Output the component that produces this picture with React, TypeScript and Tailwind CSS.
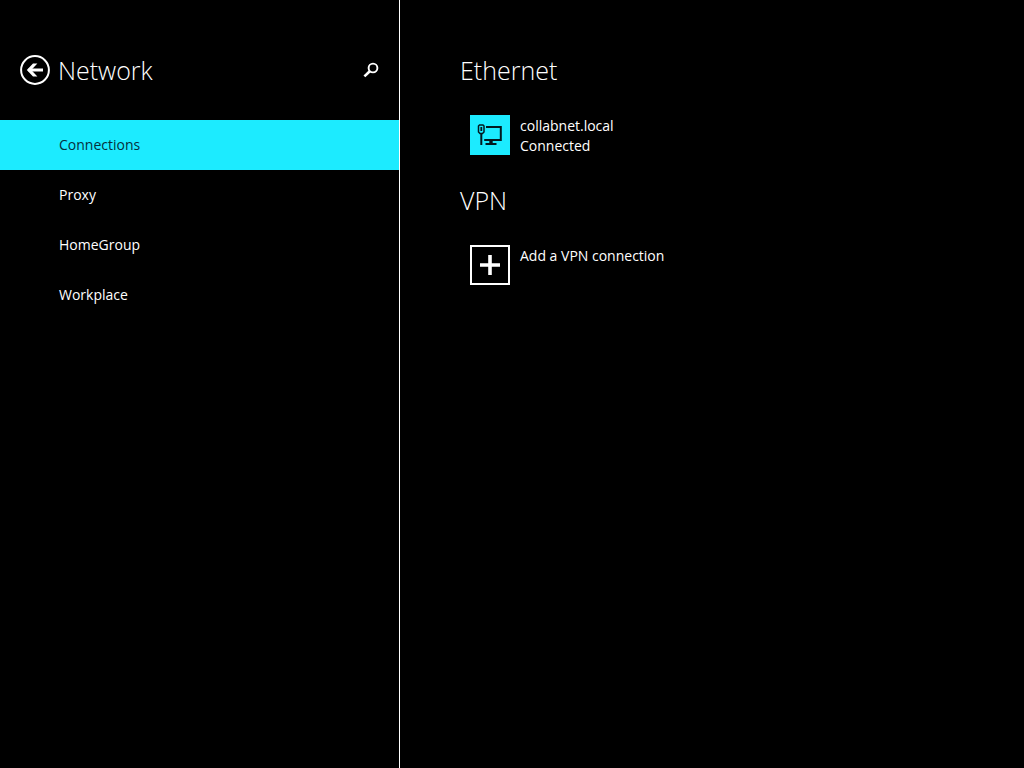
import { useState } from "react";
import type { ReactNode } from "react";

const navItems = ["Connections", "Proxy", "HomeGroup", "Workplace"];

function BackIcon() {
  return (
    <svg viewBox="0 0 30 30" className="h-[30px] w-[30px]" fill="none" stroke="currentColor" aria-hidden="true">
      <circle cx="15" cy="15" r="13.9" strokeWidth="2" />
      <path d="M8.5 15H23" strokeWidth="3" />
      <path d="M6.8 15l6.2-6.5h4.4L11.2 15l6.2 6.5h-4.4z" fill="currentColor" stroke="none" />
    </svg>
  );
}

function SearchIcon() {
  return (
    <svg viewBox="0 0 16 16" className="h-4 w-4" fill="none" stroke="currentColor" aria-hidden="true">
      <circle cx="10" cy="6" r="4.4" strokeWidth="1.9" />
      <path d="M6.8 9.2L1.4 14.4" strokeWidth="2.6" />
    </svg>
  );
}

function EthernetIcon() {
  return (
    <svg viewBox="0 0 40 40" className="h-10 w-10" fill="none" stroke="currentColor" aria-hidden="true">
      <path d="M9.5 10h3.5l1 1v6l-1.5 1.5h-2.5l-1.5-1.5v-6z" strokeWidth="1.5" />
      <path d="M11.3 12v4" strokeWidth="1.8" />
      <path d="M11.3 18.5V30" strokeWidth="2" />
      <path d="M16 12h14.8v13H14.2" strokeWidth="2" />
      <path d="M21 25v3.5" strokeWidth="3.4" />
      <path d="M15.5 29h11" strokeWidth="2" />
    </svg>
  );
}

function PlusIcon() {
  return (
    <svg viewBox="0 0 20 20" className="h-5 w-5" stroke="currentColor" strokeWidth="3.6" aria-hidden="true">
      <path d="M10 0v20M0 10h20" />
    </svg>
  );
}

interface SectionProps {
  title: string;
  children: ReactNode;
}

function Section({ title, children }: SectionProps) {
  return (
    <section>
      <h2 className="text-[25px] leading-[30px] font-light">{title}</h2>
      <div className="pt-[30px] pl-[10px]">{children}</div>
    </section>
  );
}

export default function App() {
  const [active, setActive] = useState("Connections");

  return (
    <div className="flex min-h-screen bg-black font-['Open_Sans','Noto_Sans',sans-serif] text-[14px] leading-5 text-white">
      <aside className="w-[400px] shrink-0 border-r border-white pt-[55px]">
        <header className="flex items-center pr-5 pl-5">
          <button type="button" aria-label="Back">
            <BackIcon />
          </button>
          <h1 className="ml-2 flex-1 text-[25px] leading-[30px] font-light">Network</h1>
          <button type="button" aria-label="Search">
            <SearchIcon />
          </button>
        </header>
        <nav className="mt-[35px] flex flex-col">
          {navItems.map((item) => (
            <button
              key={item}
              type="button"
              onClick={() => setActive(item)}
              className={`h-[50px] pl-[59px] text-left ${active === item ? "bg-[#1cebff] text-[#06303c]" : ""}`}
            >
              {item}
            </button>
          ))}
        </nav>
      </aside>

      <main className="flex flex-1 flex-col gap-[29px] pt-[55px] pl-[60px]">
        <Section title="Ethernet">
          <button type="button" className="flex items-start gap-[10px] text-left">
            <span className="bg-[#1cebff] text-[#021a20]">
              <EthernetIcon />
            </span>
            <span className="pt-px">
              <span className="block">collabnet.local</span>
              <span className="block">Connected</span>
            </span>
          </button>
        </Section>
        <Section title="VPN">
          <button type="button" className="flex items-start gap-[10px] text-left">
            <span className="flex h-10 w-10 items-center justify-center border-2 border-white">
              <PlusIcon />
            </span>
            <span className="pt-px">Add a VPN connection</span>
          </button>
        </Section>
      </main>
    </div>
  );
}
